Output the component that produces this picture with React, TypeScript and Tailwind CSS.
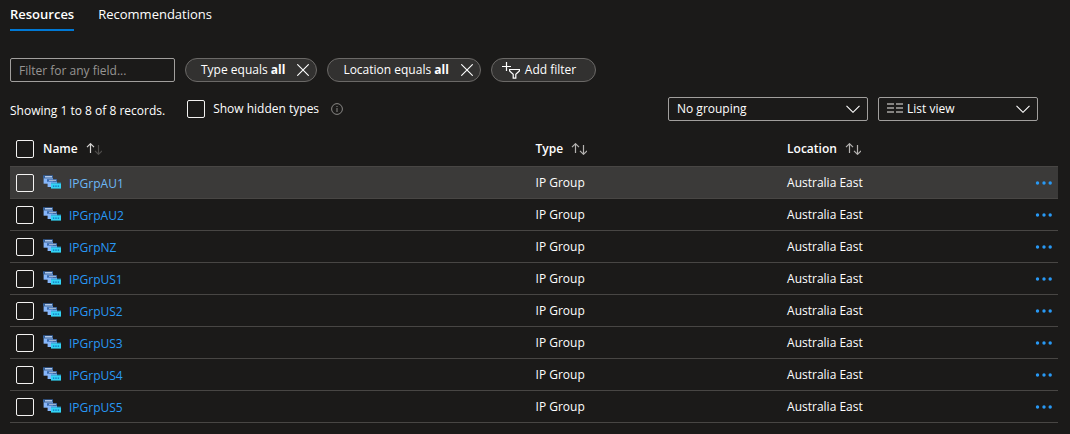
import type { ReactNode } from "react";

const resources = [
  "IPGrpAU1",
  "IPGrpAU2",
  "IPGrpNZ",
  "IPGrpUS1",
  "IPGrpUS2",
  "IPGrpUS3",
  "IPGrpUS4",
  "IPGrpUS5",
];

function CloseIcon() {
  return (
    <svg className="size-3" viewBox="0 0 12 12" fill="none" stroke="currentColor" strokeWidth="1.1">
      <path d="M0.3 0.3 11.7 11.7M11.7 0.3 0.3 11.7" />
    </svg>
  );
}

function AddFilterIcon() {
  return (
    <svg className="h-[17px] w-[18px]" viewBox="0 0 18 17" fill="none" stroke="currentColor" strokeWidth="1.2">
      <path d="M4.5 0v9M0 4.5h9" />
      <path d="M7.6 7.5h9.8v1.4l-3.6 3.3v3.9h-2.6v-3.9L7.6 8.9z" />
    </svg>
  );
}

function InfoIcon() {
  return (
    <svg className="size-3" viewBox="0 0 12 12" fill="none" stroke="currentColor">
      <circle cx="6" cy="6" r="5.4" />
      <path d="M6 5v4M6 3v1" />
    </svg>
  );
}

function ChevronIcon() {
  return (
    <svg
      className="pointer-events-none absolute right-2 top-2 h-2 w-[14px]"
      viewBox="0 0 14 8"
      fill="none"
      stroke="currentColor"
      strokeWidth="1.1"
    >
      <path d="M0.5 0.8 7 7.3 13.5 0.8" />
    </svg>
  );
}

function ListIcon() {
  return (
    <svg
      className="pointer-events-none absolute left-[9px] top-[5px] h-3 w-4 text-[#858381]"
      viewBox="0 0 16 12"
      fill="currentColor"
      shapeRendering="crispEdges"
    >
      <path d="M0 1h7v2H0zM9 1h7v2H9zM0 5h7v2H0zM9 5h7v2H9zM0 9h7v2H0zM9 9h7v2H9z" />
    </svg>
  );
}

function SortIcon({ ascending = false }: { ascending?: boolean }) {
  return (
    <svg className="h-3 w-4" viewBox="0 0 16 12" fill="none" strokeWidth="1.2">
      <path d="M4.5 10V0.8M1 4.2l3.5-3.5L8 4.2" stroke={ascending ? "#d8d6d4" : "#b5b3b1"} />
      <path d="M12.5 2v9.2M9 7.8l3.5 3.5L16 7.8" stroke={ascending ? "#4f4d4b" : "#b5b3b1"} />
    </svg>
  );
}

function IpGroupIcon() {
  return (
    <svg className="h-[14px] w-[18px] shrink-0" viewBox="0 0 18 14">
      <path d="M0 0.3h10v3H0z" fill="#34629f" />
      <path d="M2 1.2h7v1.2H2z" fill="#d5e4fa" />
      <path d="M0.6 3.3h9.4v5.4H0.6z" fill="#86b6fa" />
      <path d="M4 4.2h10v2.6H4z" fill="#3a6aad" />
      <path d="M6 4.8h7v1.2H6z" fill="#9eb4d0" />
      <path d="M4.6 6.8H14V12H4.6z" fill="#86b6fa" />
      <path d="M8 7.6h10v1.2H8z" fill="#2896c8" />
      <path d="M8 8.6h10V13.6H8z" fill="#32d4f5" />
      <path d="M9.9 10.4h1.4v1.4H9.9zM12.3 10.4h1.4v1.4h-1.4zM14.7 10.4h1.4v1.4h-1.4z" fill="#1268b8" />
    </svg>
  );
}

function MoreIcon() {
  return (
    <svg className="h-1 w-[18px]" viewBox="0 0 18 4" fill="currentColor">
      <circle cx="3.5" cy="2" r="1.7" />
      <circle cx="10" cy="2" r="1.7" />
      <circle cx="16.2" cy="2" r="1.7" />
    </svg>
  );
}

function Checkbox({ id, label }: { id?: string; label?: string }) {
  return (
    <input
      id={id}
      type="checkbox"
      aria-label={label}
      className="block size-[18px] shrink-0 appearance-none rounded-xs border border-[#f3f2f1] checked:bg-[#2899f5]"
    />
  );
}

function FilterPill({ field }: { field: string }) {
  return (
    <button
      type="button"
      className="flex h-6 items-center gap-3 rounded-full border border-[#6b6967] bg-[#323130] pl-[15px] pr-[7px]"
    >
      <span>
        {field} equals <b>all</b>
      </span>
      <CloseIcon />
    </button>
  );
}

function HeaderCell({ children, ascending }: { children: ReactNode; ascending?: boolean }) {
  return (
    <th scope="col" className="p-0 text-left font-semibold">
      <button type="button" className="flex items-center gap-2">
        {children}
        <SortIcon ascending={ascending} />
      </button>
    </th>
  );
}

export default function App() {
  return (
    <main className="min-h-screen bg-[#1b1a19] pl-[10px] pr-3 font-['Open_Sans','Noto_Sans',sans-serif] text-[12px] leading-4 text-white">
      <nav className="flex gap-6 pt-[6px] text-[13px] leading-4">
        <a href="#resources" aria-current="page" className="border-b-2 border-[#0078d4] pb-[7px] font-semibold">
          Resources
        </a>
        <a href="#recommendations">Recommendations</a>
      </nav>

      <div className="mt-[27px] flex items-center gap-[10px]">
        <input
          type="text"
          aria-label="Filter for any field"
          placeholder="Filter for any field..."
          className="h-6 w-[165px] rounded-xs border border-[#a19f9d] bg-transparent px-2 placeholder:text-[#979593]"
        />
        <FilterPill field="Type" />
        <FilterPill field="Location" />
        <button
          type="button"
          className="flex h-6 items-center gap-[5px] rounded-full border border-[#6b6967] bg-[#323130] pl-[10px] pr-[19px]"
        >
          <AddFilterIcon />
          Add filter
        </button>
      </div>

      <div className="mt-[15px] flex items-center pr-5">
        <p className="pt-1">Showing 1 to 8 of 8 records.</p>
        <div className="ml-[22px] flex items-center gap-2">
          <Checkbox id="hidden-types" />
          <label htmlFor="hidden-types">Show hidden types</label>
          <button type="button" aria-label="About hidden types" className="ml-1 text-[#8a8886]">
            <InfoIcon />
          </button>
        </div>
        <div className="ml-auto flex gap-[10px]">
          <div className="relative">
            <select
              aria-label="Grouping"
              className="block h-6 w-[200px] appearance-none rounded-xs border border-[#a19f9d] bg-[#1b1a19] px-2"
            >
              <option>No grouping</option>
            </select>
            <ChevronIcon />
          </div>
          <div className="relative">
            <select
              aria-label="View"
              className="block h-6 w-40 appearance-none rounded-xs border border-[#a19f9d] bg-[#1b1a19] pl-7 pr-2"
            >
              <option>List view</option>
            </select>
            <ListIcon />
            <ChevronIcon />
          </div>
        </div>
      </div>

      <table className="mt-[11px] w-full table-fixed border-collapse">
        <colgroup>
          <col className="w-[33px]" />
          <col className="w-[47%]" />
          <col className="w-[24%]" />
          <col />
          <col className="w-6" />
        </colgroup>
        <thead>
          <tr className="h-[34px] border-b border-[#484644]">
            <th className="p-0 pl-[6px]">
              <Checkbox label="Select all" />
            </th>
            <HeaderCell ascending>Name</HeaderCell>
            <HeaderCell>Type</HeaderCell>
            <HeaderCell>Location</HeaderCell>
            <td />
          </tr>
        </thead>
        <tbody>
          {resources.map((name) => (
            <tr key={name} className="group h-8 border-b border-[#484644] first:bg-[#3b3a39]">
              <td className="p-0 pl-[6px] pt-0.5">
                <Checkbox label={`Select ${name}`} />
              </td>
              <td className="p-0">
                <div className="flex items-center gap-2">
                  <IpGroupIcon />
                  <a href={`#${name}`} className="pt-1 text-[#2899f5] group-first:text-[#6cb8f6]">
                    {name}
                  </a>
                </div>
              </td>
              <td className="p-0 pt-0.5">IP Group</td>
              <td className="p-0 pt-0.5">Australia East</td>
              <td className="p-0 pt-0.5">
                <button
                  type="button"
                  aria-label={`More actions for ${name}`}
                  className="flex h-4 items-center text-[#2899f5]"
                >
                  <MoreIcon />
                </button>
              </td>
            </tr>
          ))}
        </tbody>
      </table>
    </main>
  );
}
